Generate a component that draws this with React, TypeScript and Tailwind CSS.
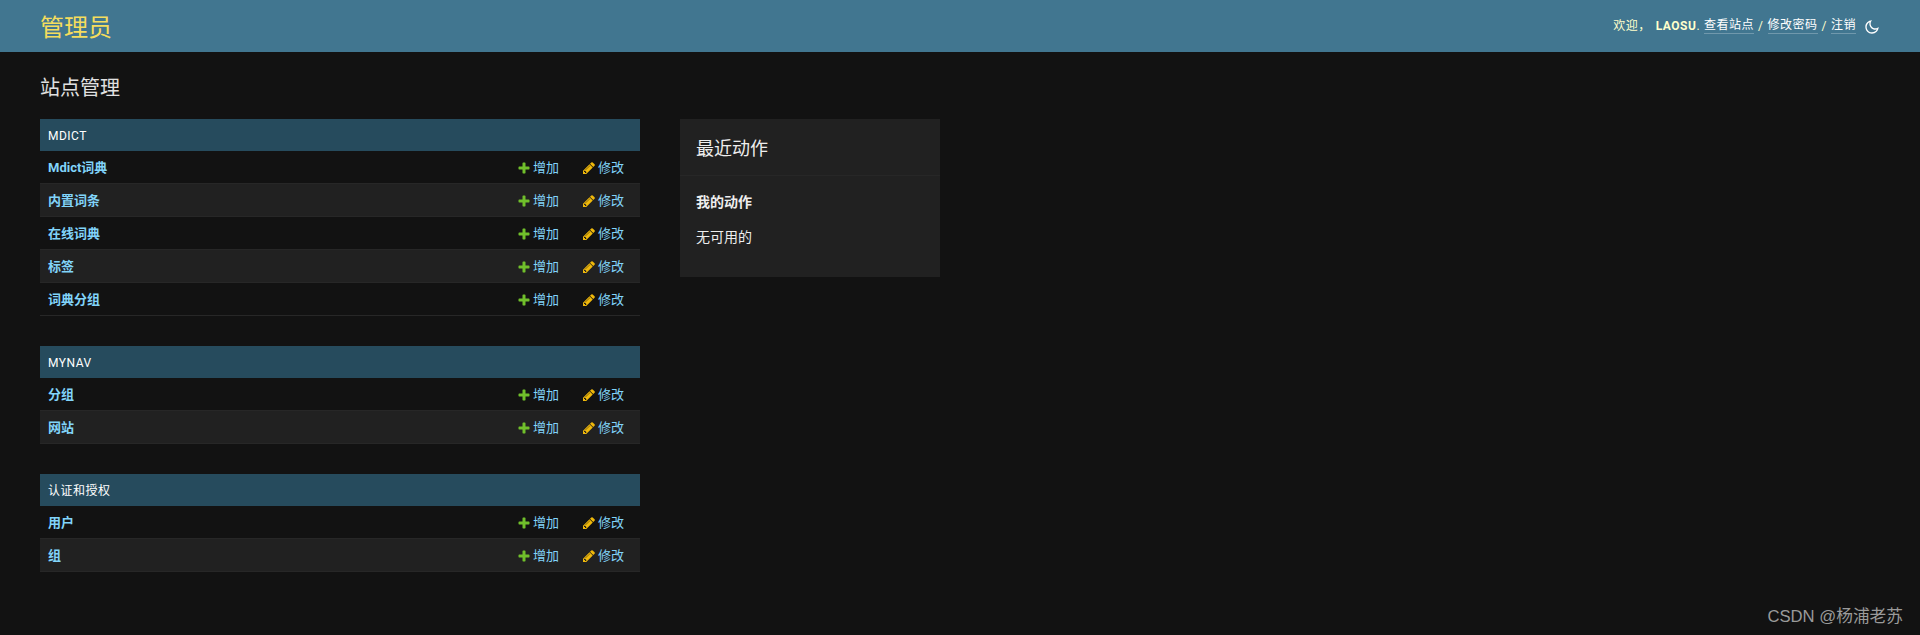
import React from "react";

const FONT = "font-['Roboto','Noto_Sans_CJK_SC',sans-serif]";

const modules = [
  { title: "MDICT", rows: ["Mdict词典", "内置词条", "在线词典", "标签", "词典分组"] },
  { title: "MYNAV", rows: ["分组", "网站"] },
  { title: "认证和授权", rows: ["用户", "组"] },
];

const PlusIcon = () => (
  <svg viewBox="0 0 1792 1792" className="w-[14px] h-[14px] shrink-0 -mt-[1px]" fill="#70bf2b">
    <path d="M1600 796v192q0 40-28 68t-68 28h-416v416q0 40-28 68t-68 28h-192q-40 0-68-28t-28-68v-416h-416q-40 0-68-28t-28-68v-192q0-40 28-68t68-28h416v-416q0-40 28-68t68-28h192q40 0 68 28t28 68v416h416q40 0 68 28t28 68z" />
  </svg>
);

const PencilIcon = () => (
  <svg viewBox="0 0 1792 1792" className="w-[14px] h-[14px] shrink-0 -mt-[1px]" fill="#efb80b">
    <path d="M491 1536l91-91-235-235-91 91v107h128v128h107zm523-928q0-22-22-22-10 0-17 7l-542 542q-7 7-7 17 0 22 22 22 10 0 17-7l542-542q7-7 7-17zm-54-192l416 416-832 832h-416v-416zm683 96q0 53-37 90l-166 166-416-416 166-165q36-38 90-38 53 0 91 38l235 234q37 39 37 91z" />
  </svg>
);

const MoonIcon = () => (
  <svg viewBox="0 0 24 24" className="w-4 h-4 mt-[3px] ml-2" fill="#ffffff">
    <path d="M10 7C10 10.866 13.134 14 17 14C18.9584 14 20.729 13.1957 21.9995 11.8995C22 11.933 22 11.9665 22 12C22 17.5228 17.5228 22 12 22C6.47715 22 2 17.5228 2 12C2 6.47715 6.47715 2 12 2C12.0335 2 12.067 2 12.1005 2.00049C10.8043 3.27098 10 5.04157 10 7ZM4 12C4 16.4183 7.58172 20 12 20C15.0583 20 17.7158 18.2839 19.062 15.7621C18.3945 15.9187 17.7035 16 17 16C12.0294 16 8 11.9706 8 7C8 6.29648 8.08133 5.60547 8.2379 4.938C5.71611 6.28423 4 8.9417 4 12Z" />
  </svg>
);

const Row = ({ name, alt }: { name: string; alt: boolean }) => (
  <div
    className={`flex items-center h-[33px] pl-2 pr-4 pt-[2px] border-b border-[#272727] text-[13px] leading-4 text-[#81d4fa] ${
      alt ? "bg-[#212121]" : ""
    }`}
  >
    <a className="flex-1 font-bold">{name}</a>
    <a className="flex items-center gap-[2px]">
      <PlusIcon />
      增加
    </a>
    <a className="flex items-center gap-[2px] ml-[23px]">
      <PencilIcon />
      修改
    </a>
  </div>
);

export default function App() {
  return (
    <div className={`relative min-h-screen bg-[#121212] text-[#eeeeee] ${FONT}`}>
      <header className="flex items-center justify-between h-[52px] px-10 bg-[#417690]">
        <h1 className="text-2xl leading-8 text-[#f5dd5d] mt-[4px]">管理员</h1>
        <div className="flex items-center text-xs tracking-[0.5px] text-[#ffffcc] -mt-[1px]">
          <span>欢迎，</span>
          <strong className="ml-[5px] font-bold">LAOSU</strong>
          <span>.</span>
          <a className="ml-1 text-white border-b border-white/25">查看站点</a>
          <span className="mx-1">/</span>
          <a className="text-white border-b border-white/25">修改密码</a>
          <span className="mx-1">/</span>
          <a className="text-white border-b border-white/25">注销</a>
          <MoonIcon />
        </div>
      </header>

      <main className="px-10 pt-[22px]">
        <h1 className="text-xl leading-7 text-[#e0e0e0] mb-[17px]">站点管理</h1>
        <div className="flex items-start gap-10">
          <div className="w-[600px] flex flex-col gap-[30px]">
            {modules.map((m) => (
              <section key={m.title}>
                <div className="flex items-center h-8 px-2 pt-[2px] bg-[#264b5d] text-xs tracking-[0.5px] text-white">
                  {m.title}
                </div>
                {m.rows.map((r, i) => (
                  <Row key={r} name={r} alt={i % 2 === 1} />
                ))}
              </section>
            ))}
          </div>

          <aside className="w-[260px] h-[158px] bg-[#212121]">
            <h2 className="h-[57px] px-4 pt-[16px] text-lg leading-[27px] border-b border-[#272727]">
              最近动作
            </h2>
            <div className="px-4 pt-[16px] text-sm leading-5">
              <h3 className="font-bold">我的动作</h3>
              <p className="mt-[15px]">无可用的</p>
            </div>
          </aside>
        </div>
      </main>

      <div className="absolute right-[17px] bottom-[6px] text-[16.7px] leading-6 text-[#9a9a9a] font-['Liberation_Sans','Noto_Sans_CJK_SC',sans-serif]">
        CSDN @杨浦老苏
      </div>
    </div>
  );
}
